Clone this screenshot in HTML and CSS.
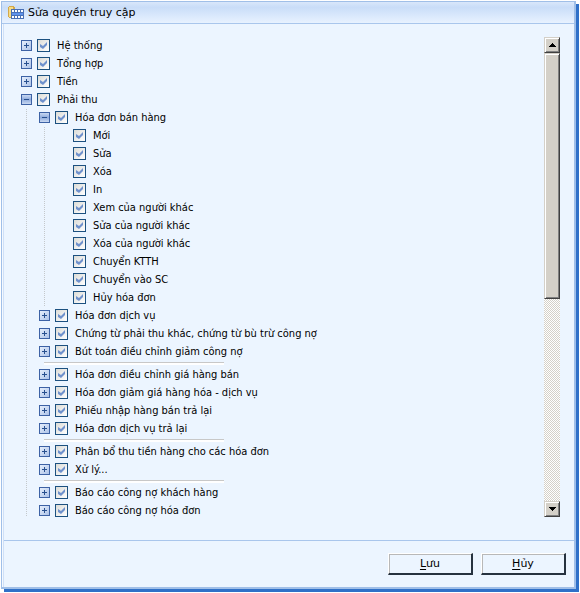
FILE: index.html
```html
<!DOCTYPE html>
<html lang="vi">
<head>
<meta charset="utf-8">
<title>Sửa quyền truy cập</title>
<link rel="stylesheet" href="styles.css">
</head>
<body>
<form class="window">
  <header class="titlebar">
    <svg class="titlebar-icon" viewBox="0 0 16 14" width="16" height="14" shape-rendering="crispEdges" aria-hidden="true">
      <path fill="#d3a84a" d="M1 0h5v1h1v3h-3v8h-3v-1h-1v-10h1z"/>
      <path fill="#f7dc86" d="M1 1h4v2h-2v8h-2z"/>
      <path fill="#4a70b5" d="M3 3h13v10h-13z"/>
      <path fill="#fff" d="M4 4h2v2h-2zM7 4h2v2h-2zM10 4h2v2h-2zM13 4h2v2h-2zM4 10h2v2h-2zM7 10h2v2h-2zM10 10h2v2h-2zM13 10h2v2h-2z"/>
      <path fill="#5f92ea" d="M4 7h11v2h-11z"/>
    </svg>
    <h1 class="title">Sửa quyền truy cập</h1>
  </header>
  <main class="content">
    <ul class="tree">
      <li><div class="row"><button type="button" class="toggle" aria-label="Mở rộng"></button><label><input type="checkbox" checked>Hệ thống</label></div></li>
      <li><div class="row"><button type="button" class="toggle" aria-label="Mở rộng"></button><label><input type="checkbox" checked>Tổng hợp</label></div></li>
      <li><div class="row"><button type="button" class="toggle" aria-label="Mở rộng"></button><label><input type="checkbox" checked>Tiền</label></div></li>
      <li>
        <div class="row"><button type="button" class="toggle open" aria-label="Thu gọn"></button><label><input type="checkbox" checked>Phải thu</label></div>
        <ul class="branch">
          <li>
            <div class="row"><button type="button" class="toggle open" aria-label="Thu gọn"></button><label><input type="checkbox" checked>Hóa đơn bán hàng</label></div>
            <ul class="branch leaves">
              <li class="row"><label><input type="checkbox" checked>Mới</label></li>
              <li class="row"><label><input type="checkbox" checked>Sửa</label></li>
              <li class="row"><label><input type="checkbox" checked>Xóa</label></li>
              <li class="row"><label><input type="checkbox" checked>In</label></li>
              <li class="row"><label><input type="checkbox" checked>Xem của người khác</label></li>
              <li class="row"><label><input type="checkbox" checked>Sửa của người khác</label></li>
              <li class="row"><label><input type="checkbox" checked>Xóa của người khác</label></li>
              <li class="row"><label><input type="checkbox" checked>Chuyển KTTH</label></li>
              <li class="row"><label><input type="checkbox" checked>Chuyển vào SC</label></li>
              <li class="row"><label><input type="checkbox" checked>Hủy hóa đơn</label></li>
            </ul>
          </li>
          <li class="row"><button type="button" class="toggle" aria-label="Mở rộng"></button><label><input type="checkbox" checked>Hóa đơn dịch vụ</label></li>
          <li class="row"><button type="button" class="toggle" aria-label="Mở rộng"></button><label><input type="checkbox" checked>Chứng từ phải thu khác, chứng từ bù trừ công nợ</label></li>
          <li class="row"><button type="button" class="toggle" aria-label="Mở rộng"></button><label><input type="checkbox" checked>Bút toán điều chỉnh giảm công nợ</label></li>
          <li class="divider" role="separator"></li>
          <li class="row"><button type="button" class="toggle" aria-label="Mở rộng"></button><label><input type="checkbox" checked>Hóa đơn điều chỉnh giá hàng bán</label></li>
          <li class="row"><button type="button" class="toggle" aria-label="Mở rộng"></button><label><input type="checkbox" checked>Hóa đơn giảm giá hàng hóa - dịch vụ</label></li>
          <li class="row"><button type="button" class="toggle" aria-label="Mở rộng"></button><label><input type="checkbox" checked>Phiếu nhập hàng bán trả lại</label></li>
          <li class="row"><button type="button" class="toggle" aria-label="Mở rộng"></button><label><input type="checkbox" checked>Hóa đơn dịch vụ trả lại</label></li>
          <li class="divider" role="separator"></li>
          <li class="row"><button type="button" class="toggle" aria-label="Mở rộng"></button><label><input type="checkbox" checked>Phân bổ thu tiền hàng cho các hóa đơn</label></li>
          <li class="row"><button type="button" class="toggle" aria-label="Mở rộng"></button><label><input type="checkbox" checked>Xử lý...</label></li>
          <li class="divider" role="separator"></li>
          <li class="row"><button type="button" class="toggle" aria-label="Mở rộng"></button><label><input type="checkbox" checked>Báo cáo công nợ khách hàng</label></li>
          <li class="row"><button type="button" class="toggle" aria-label="Mở rộng"></button><label><input type="checkbox" checked>Báo cáo công nợ hóa đơn</label></li>
        </ul>
      </li>
    </ul>
    <div class="scrollbar">
      <button type="button" class="scroll-arrow" aria-label="Cuộn lên"><svg viewBox="0 0 7 4" width="7" height="4" shape-rendering="crispEdges"><path d="M3 0h1v1h1v1h1v1h1v1h-7v-1h1v-1h1v-1h1z"/></svg></button>
      <div class="track"><div class="thumb"></div></div>
      <button type="button" class="scroll-arrow" aria-label="Cuộn xuống"><svg viewBox="0 0 7 4" width="7" height="4" shape-rendering="crispEdges"><path d="M0 0h7v1h-1v1h-1v1h-1v1h-1v-1h-1v-1h-1v-1h-1z"/></svg></button>
    </div>
  </main>
  <footer class="actions">
    <button type="submit" class="action"><u>L</u>ưu</button>
    <button type="button" class="action"><u>H</u>ủy</button>
  </footer>
</form>
</body>
</html>
```
FILE: styles.css
```css
* {
  box-sizing: border-box;
}

body {
  margin: 0;
  padding: 1px 4px 4px 1px;
  background: #fff;
  color: #000;
  font: 11px/17px "DejaVu Sans Condensed", Tahoma, "DejaVu Sans", sans-serif;
}

ul {
  margin: 0;
  padding: 0;
  list-style: none;
}

.window {
  display: flex;
  flex-direction: column;
  min-height: calc(100vh - 5px);
  border: solid #a0bfe8;
  border-width: 1px 2px 2px 1px;
  background: #ecf5ff;
  box-shadow: inset 1px 0 #f4f9ff, inset 2px 0 #cfe0f8, 3px 3px #2f70c8;
}

.titlebar {
  display: flex;
  align-items: center;
  gap: 4px;
  height: 22px;
  padding-left: 6px;
  border-bottom: 1px solid #a9c6ec;
  background: linear-gradient(#d9e7fb, #c9ddf8 25%, #e8f2ff);
}

.title {
  margin: 0;
  font: 11px/20px "DejaVu Sans", Verdana, sans-serif;
}

.content {
  display: flex;
  flex: 1;
  align-items: flex-start;
  justify-content: space-between;
  margin-left: 2px;
  padding: 13px 14px 20px 17px;
  border-bottom: 1px solid #a9c6ec;
}

.row {
  display: flex;
  align-items: center;
  gap: 5px;
  height: 18px;
  padding-bottom: 1px;
  white-space: nowrap;
}

.row label {
  display: flex;
  align-items: center;
  gap: 7px;
}

.branch {
  margin-left: 5px;
  padding-left: 13px;
  background: repeating-linear-gradient(#c4c8cb 0 1px, transparent 1px 2px) top left / 1px calc(100% - 3px) no-repeat;
}

.leaves {
  padding-left: 29px;
  background-size: 1px 100%;
}

.toggle {
  flex: none;
  width: 11px;
  height: 11px;
  padding: 0;
  border: 1px solid #3d62a5;
  background:
    linear-gradient(#28508f, #28508f) center / 5px 1px no-repeat,
    linear-gradient(#28508f, #28508f) center / 1px 5px no-repeat,
    linear-gradient(135deg, #e6effc, #adc3e8);
}

.toggle.open {
  background:
    linear-gradient(#28508f, #28508f) center / 5px 1px no-repeat,
    linear-gradient(#c9d9f2, #8fabdc 50%, #c9d9f2);
}

input[type="checkbox"] {
  appearance: none;
  flex: none;
  width: 13px;
  height: 13px;
  margin: 0;
  padding: 2px;
  border: 1px solid #1c5180;
  background: linear-gradient(135deg, #dcdcd7, #fff);
}

input[type="checkbox"]:checked::before {
  content: "";
  display: block;
  width: 7px;
  height: 7px;
  background: #6f91cc;
  clip-path: polygon(0 29%, 43% 57%, 100% 0, 100% 43%, 43% 100%, 0 72%);
}

.divider {
  height: 5px;
  padding: 1px 0 2px 5px;
}

.divider::before {
  content: "";
  display: block;
  width: 180px;
  height: 2px;
  border-top: 1px solid #c8c8c8;
  background: #fff;
}

.scrollbar {
  display: flex;
  flex-direction: column;
  align-self: stretch;
  width: 16px;
  margin-bottom: 3px;
}

.scroll-arrow,
.thumb {
  border: 1px solid;
  border-color: #d4d0c8 #404040 #404040 #d4d0c8;
  background: #d4d0c8;
  box-shadow: inset 1px 1px #fff, inset -1px -1px #808080;
}

.scroll-arrow {
  display: flex;
  flex: none;
  align-items: center;
  justify-content: center;
  height: 16px;
  padding: 0;
}

.track {
  flex: 1;
  background: repeating-conic-gradient(#d4d0c8 0 25%, #fff 0 50%) 0 0 / 2px 2px;
}

.thumb {
  height: 55%;
}

.actions {
  display: flex;
  justify-content: flex-end;
  gap: 8px;
  padding: 12px 8px;
}

.action {
  width: 85px;
  height: 22px;
  padding: 0;
  border: solid;
  border-width: 1px 2px 2px 1px;
  border-color: #fff #26323f #26323f #fff;
  background: #ecf5ff;
  box-shadow: inset 1px 1px #b8b8b8;
  color: #000;
  font: 11px/18px "DejaVu Sans", Verdana, sans-serif;
}

u {
  text-underline-offset: 2px;
}
```
